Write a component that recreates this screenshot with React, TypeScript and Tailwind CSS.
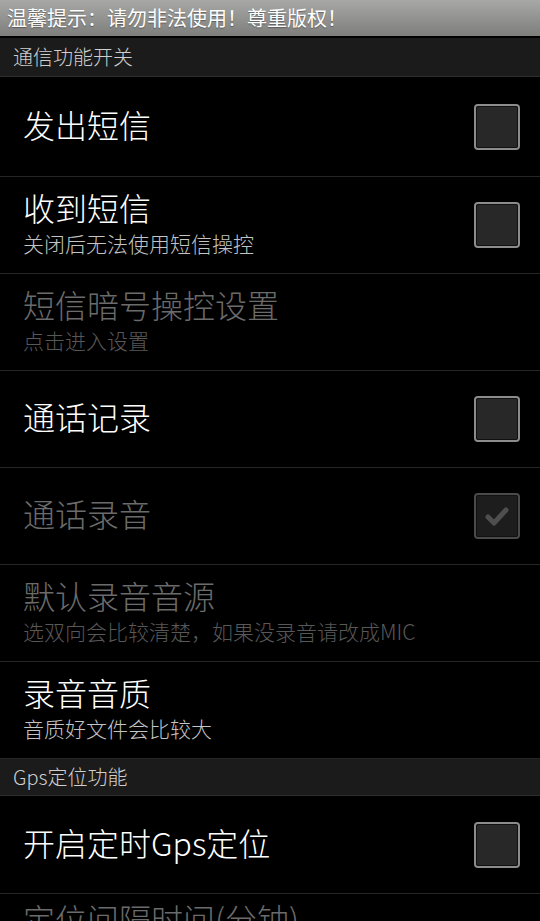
import React from 'react';

type Row = {
  title: string;
  summary?: string;
  disabled?: boolean;
  checkbox?: 'off' | 'on';
  h?: string;
};

const font = { fontFamily: '"Noto Sans CJK SC", "Noto Sans", sans-serif' };

const Checkbox = ({ checked, disabled }: { checked: boolean; disabled?: boolean }) => (
  <div
    className={`w-[46px] h-[46px] rounded-[4px] border-2 flex items-center justify-center shrink-0 ${
      disabled ? 'border-[#4a4a4a] bg-[#1d1d1d]' : 'border-[#8c8c8c] bg-[#282828]'
    }`}
  >
    <div className="w-full h-full rounded-[2px] border border-[#111] flex items-center justify-center">
      {checked && (
        <svg width="28" height="24" viewBox="0 0 28 24">
          <path
            d="M5 13 L11 19 L23 6"
            fill="none"
            stroke={disabled ? '#4e4e4e' : '#9ccc3c'}
            strokeWidth="5"
            strokeLinecap="round"
            strokeLinejoin="round"
          />
        </svg>
      )}
    </div>
  </div>
);

const PrefRow = ({ row }: { row: Row }) => (
  <div
    className={`${row.h ?? 'h-[97px]'} border-b border-[#262626] flex items-center pl-[23px] pr-[20px]`}
  >
    <div className="flex-1 min-w-0 pb-[6px]">
      <div
        className={`text-[32px] leading-[38px] font-light whitespace-nowrap ${
          row.disabled ? 'text-[#6b6b6b]' : 'text-white'
        }`}
      >
        {row.title}
      </div>
      {row.summary && (
        <div
          className={`mt-[3px] text-[21px] leading-[28px] font-light whitespace-nowrap ${
            row.disabled ? 'text-[#585858]' : 'text-[#c4c4c4]'
          }`}
        >
          {row.summary}
        </div>
      )}
    </div>
    {row.checkbox && <Checkbox checked={row.checkbox === 'on'} disabled={row.disabled} />}
  </div>
);

const SectionHeader = ({ label, h }: { label: string; h: string }) => (
  <div
    className={`${h} bg-[#1b1b1b] border-b border-[#2e2e2e] flex items-center pl-[13px] text-[20px] font-light text-[#cfcfcf]`}
  >
    {label}
  </div>
);

const commRows: Row[] = [
  { title: '发出短信', checkbox: 'off', h: 'h-[100px]' },
  { title: '收到短信', summary: '关闭后无法使用短信操控', checkbox: 'off' },
  { title: '短信暗号操控设置', summary: '点击进入设置', disabled: true },
  { title: '通话记录', checkbox: 'off' },
  { title: '通话录音', checkbox: 'on', disabled: true },
  { title: '默认录音音源', summary: '选双向会比较清楚，如果没录音请改成MIC', disabled: true },
  { title: '录音音质', summary: '音质好文件会比较大' },
];

export default function App() {
  return (
    <div className="w-[540px] h-[921px] overflow-hidden bg-black" style={font}>
      {/* 顶部提示条 */}
      <div className="h-[38px] border-b-2 border-black bg-gradient-to-b from-[#a8a8a6] to-[#7e7e7c] flex items-center pl-[7px]">
        <span className="text-[20px] text-white leading-none [text-shadow:0_1px_1px_rgba(0,0,0,0.35)]">
          温馨提示：请勿非法使用！尊重版权！
        </span>
      </div>

      <SectionHeader label="通信功能开关" h="h-[39px]" />
      {commRows.map((r) => (
        <PrefRow key={r.title} row={r} />
      ))}

      <SectionHeader label="Gps定位功能" h="h-[37px]" />
      <PrefRow row={{ title: '开启定时Gps定位', checkbox: 'off', h: 'h-[98px]' }} />
      <div className="pl-[23px] pt-[5px] text-[32px] leading-[38px] font-light text-[#6b6b6b] whitespace-nowrap">
        定位间隔时间(分钟)
      </div>
    </div>
  );
}
